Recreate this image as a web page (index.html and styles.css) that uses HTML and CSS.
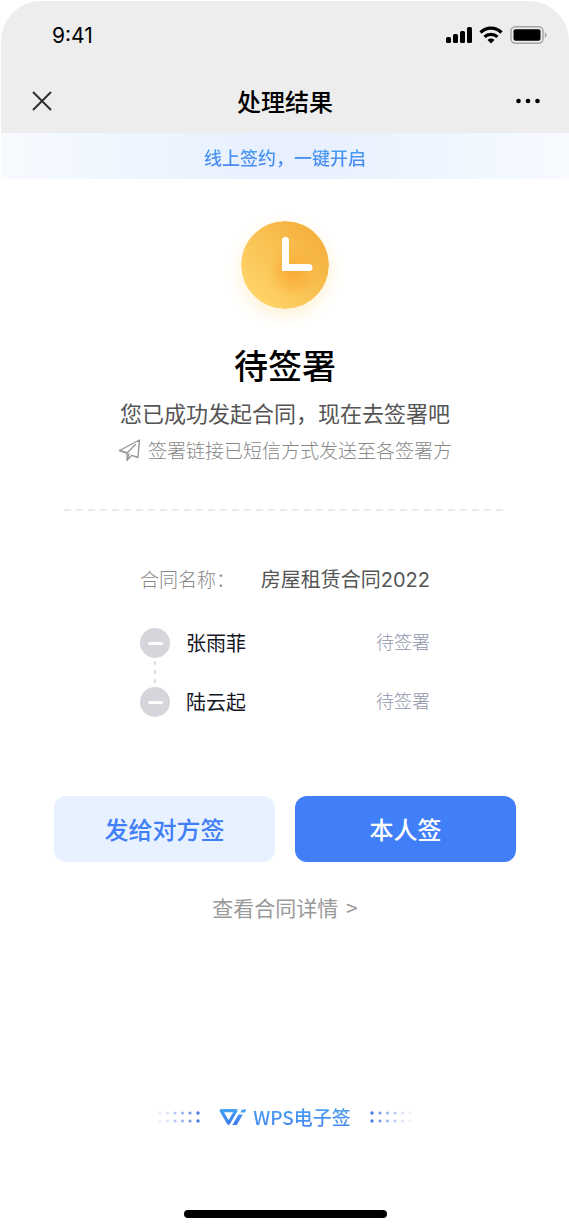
FILE: index.html
```html
<!DOCTYPE html>
<html lang="zh-CN">
<head>
<meta charset="utf-8">
<meta name="viewport" content="width=device-width, initial-scale=1">
<title>处理结果</title>
<link rel="stylesheet" href="styles.css">
</head>
<body>
<div class="screen">
  <header class="top">
    <div class="status-bar">
      <span class="time">9:41</span>
      <svg class="indicators" width="102" height="20" viewBox="0 0 102 20" aria-hidden="true">
        <rect x="1" y="12" width="5" height="6" rx="1.5"/>
        <rect x="8" y="9" width="5" height="9" rx="1.5"/>
        <rect x="15" y="6" width="5" height="12" rx="1.5"/>
        <rect x="22" y="2" width="5" height="16" rx="1.5"/>
        <g fill="none" stroke="#000" stroke-width="3.2">
          <path d="M35.5 7.5a15 15 0 0 1 21 0"/>
          <path d="M39.5 11.9a9.5 9.5 0 0 1 13 0"/>
        </g>
        <path d="M42.5 15a5.5 5.5 0 0 1 7 0L46 18.6z"/>
        <rect x="66" y="1.8" width="32" height="16.4" rx="4.5" fill="none" stroke="#a6a6a6" stroke-width="1.5"/>
        <rect x="68.5" y="4.2" width="27" height="11.6" rx="2"/>
        <path d="M99.8 7.2c2.4.8 2.4 4.8 0 5.6z" fill="#a6a6a6"/>
      </svg>
    </div>
    <nav class="nav">
      <button class="icon-button" type="button" aria-label="关闭">
        <svg width="20" height="20" viewBox="0 0 20 20"><path d="M1 1l18 18M19 1L1 19" fill="none" stroke="#2e2e2e" stroke-width="2"/></svg>
      </button>
      <h1 class="title">处理结果</h1>
      <button class="icon-button" type="button" aria-label="更多">
        <svg width="26" height="6" viewBox="0 0 26 6"><circle cx="3.5" cy="3" r="2.3"/><circle cx="13" cy="3" r="2.3"/><circle cx="22.5" cy="3" r="2.3"/></svg>
      </button>
    </nav>
  </header>
  <p class="banner"><span class="gradient-text">线上签约，一键开启</span></p>
  <main class="content">
    <section class="result">
      <svg class="clock" width="88" height="88" viewBox="0 0 88 88" aria-hidden="true">
        <defs>
          <linearGradient id="face" x1="0.1" y1="0.9" x2="0.85" y2="0.2"><stop offset="0" stop-color="#ffd66c"/><stop offset="1" stop-color="#f5b13f"/></linearGradient>
          <radialGradient id="shade"><stop offset="0" stop-color="#faa52c" stop-opacity=".8"/><stop offset="1" stop-color="#faa52c" stop-opacity="0"/></radialGradient>
        </defs>
        <circle cx="44" cy="44" r="44" fill="url(#face)"/>
        <circle cx="52" cy="51" r="25" fill="url(#shade)"/>
        <path d="M41 19.5a3.5 3.5 0 0 1 7 0V43h20a3.500 3.500 0 0 1 0 7H41z" fill="#fff"/>
      </svg>
      <h2 class="state">待签署</h2>
      <p class="message">您已成功发起合同，现在去签署吧</p>
      <p class="hint">
        <svg width="24" height="24" viewBox="0 0 24 24" fill="none" stroke="#999" stroke-width="1.4" stroke-linejoin="round" stroke-linecap="round" aria-hidden="true">
          <path d="M1.5 12.5L21.5 2l-1.600 17.500-6-2.200-4.700 4.700-.2-7z"/>
          <path d="M1.5 12.5L9 15l8.500-8.500M9.200 22l1.700-6"/>
        </svg>
        <span>签署链接已短信方式发送至各签署方</span>
      </p>
    </section>
    <svg class="divider" height="2" aria-hidden="true"><line x1="0" y1="1" x2="100%" y2="1" stroke="#e6e6e6" stroke-width="1.5" stroke-dasharray="7 5"/></svg>
    <section class="details" id="details">
      <dl class="contract"><dt>合同名称：</dt><dd>房屋租赁合同<span class="digits">2022</span></dd></dl>
      <ul class="signers">
        <li class="signer"><span class="mark"></span><span class="name">张雨菲</span><span class="pending">待签署</span></li>
        <li class="signer"><span class="mark"></span><span class="name">陆云起</span><span class="pending">待签署</span></li>
      </ul>
    </section>
    <div class="actions">
      <button class="button button-soft" type="button">发给对方签</button>
      <button class="button button-main" type="button">本人签</button>
    </div>
    <a class="more" href="#details">查看合同详情 <span class="arrow">&gt;</span></a>
  </main>
  <footer class="footer">
    <div class="brand">
      <svg class="dots" width="44" height="14" viewBox="0 0 44 14" aria-hidden="true"><g id="dots" fill="#4a7de0">
        <circle cx="3" cy="3" r="1.6" opacity=".12"/><circle cx="3" cy="11" r="1.6" opacity=".12"/>
        <circle cx="10.5" cy="3" r="1.6" opacity=".22"/><circle cx="10.5" cy="11" r="1.6" opacity=".22"/>
        <circle cx="18" cy="3" r="1.6" opacity=".4"/><circle cx="18" cy="11" r="1.6" opacity=".4"/>
        <circle cx="25.5" cy="3" r="1.6" opacity=".55"/><circle cx="25.5" cy="11" r="1.6" opacity=".55"/>
        <circle cx="33" cy="3" r="1.6" opacity=".75"/><circle cx="33" cy="11" r="1.6" opacity=".75"/>
        <circle cx="41" cy="3" r="1.7"/><circle cx="41" cy="11" r="1.7"/>
      </g></svg>
      <span class="brand-name">
        <svg width="28" height="18" viewBox="0 0 28 18" aria-hidden="true">
          <defs><linearGradient id="mark" gradientUnits="userSpaceOnUse" x1="0" y1="1" x2="0" y2="17"><stop offset="0" stop-color="#45a5f5"/><stop offset="1" stop-color="#3f77ee"/></linearGradient></defs>
          <path fill="none" stroke="url(#mark)" stroke-width="3.2" stroke-linejoin="round" d="M6 2.600h11L9.500 15.200 2.200 2.600H7"/>
          <path fill="url(#mark)" d="M19.5 6.5h4.300L17.800 17h-4.400zM23 1.500h4.400L25.800 4.600h-4.400z"/>
        </svg>
        <span class="gradient-text">WPS电子签</span>
      </span>
      <svg class="dots dots-right" width="44" height="14" viewBox="0 0 44 14" aria-hidden="true"><use href="#dots"/></svg>
    </div>
    <div class="home-indicator"></div>
  </footer>
</div>
</body>
</html>
```
FILE: styles.css
```css
* { box-sizing: border-box; }
body {
  margin: 0;
  background: #fff;
  color: #000;
  font-family: "Noto Sans CJK SC", sans-serif;
}
h1, h2, p, dl, dd, ul { margin: 0; padding: 0; }
button { border: 0; padding: 0; font-family: inherit; cursor: pointer; }
svg { display: block; flex: none; }
.screen {
  min-height: 100vh;
  padding: 1px 0 0 1px;
  display: flex;
  flex-direction: column;
}
.top { background: #ededed; border-radius: 40px 40px 0 0; }
.status-bar {
  height: 68px;
  padding: 0 22px 0 51px;
  display: flex;
  align-items: center;
  justify-content: space-between;
}
.time { font-family: Inter, sans-serif; font-size: 21px; }
.nav {
  height: 64px;
  padding: 0 27px;
  display: flex;
  align-items: center;
  justify-content: space-between;
}
.icon-button {
  width: 28px;
  height: 28px;
  display: grid;
  place-items: center;
  background: none;
}
.title { font-size: 24px; line-height: 36px; font-weight: 500; }
.banner {
  height: 46px;
  padding-top: 2px;
  display: grid;
  place-items: center;
  background: linear-gradient(90deg, #f7fbff, #e8f0ff 45%, #e8f0ff 55%, #f7fbff);
  font-size: 18px;
  line-height: 28px;
  font-weight: 500;
}
.gradient-text {
  background: linear-gradient(#4aa5f2, #4580f0);
  background-clip: text;
  -webkit-background-clip: text;
  color: transparent;
}
.content {
  padding: 42px 53px 0;
  display: flex;
  flex-direction: column;
  align-items: center;
}
.result { display: flex; flex-direction: column; align-items: center; }
.clock { border-radius: 50%; box-shadow: 0 6px 18px #fff0d2; }
.state { margin-top: 32px; font-size: 34px; line-height: 48px; font-weight: 500; }
.message { margin-top: 7px; font-size: 22px; line-height: 32px; color: #555; }
.hint {
  margin-top: 8px;
  display: flex;
  align-items: center;
  gap: 6px;
  font-size: 19px;
  line-height: 28px;
  color: #888;
  font-weight: 300;
}
.divider { width: calc(100% - 20px); margin-top: 45px; }
.details { width: 290px; margin-top: 53px; }
.contract { display: flex; justify-content: space-between; font-size: 20px; line-height: 30px; }
.contract dt { color: #888; font-size: 19px; font-weight: 300; }
.contract dd { color: #555; }
.digits { font-family: Inter, sans-serif; }
.signers { margin-top: 33px; display: grid; gap: 29px; list-style: none; }
.signer { position: relative; display: flex; align-items: center; height: 30px; }
.signer + .signer::before {
  content: "";
  position: absolute;
  left: 14px;
  bottom: 32px;
  width: 2px;
  height: 24px;
  background: repeating-linear-gradient(#dddee2 0 4px, transparent 4px 9px);
}
.mark {
  width: 30px;
  height: 30px;
  display: grid;
  place-items: center;
  border-radius: 50%;
  background: #d5d6db;
}
.mark::before { content: ""; width: 15px; height: 3px; border-radius: 2px; background: #fff; }
.name { margin-left: 16px; font-size: 20px; line-height: 30px; color: #15161f; }
.pending { margin-left: auto; padding-bottom: 4px; font-size: 18px; line-height: 26px; color: #8f96aa; font-weight: 300; }
.actions { width: 100%; margin-top: 79px; display: grid; grid-template-columns: 1fr 1fr; gap: 20px; }
.button { height: 66px; border-radius: 12px; font-size: 24px; line-height: 36px; font-weight: 500; }
.button-soft { background: #e8f1ff; color: #417ff9; }
.button-main { background: #417ff9; color: #fff; }
.more { margin-top: 29px; font-size: 21px; line-height: 32px; color: #999; text-decoration: none; }
.arrow { margin-left: 3px; }
.footer {
  margin-top: auto;
  padding-bottom: 13px;
  display: flex;
  flex-direction: column;
  align-items: center;
}
.brand { display: flex; align-items: center; gap: 18px; }
.brand-name { display: flex; align-items: center; gap: 6px; font-size: 19px; line-height: 30px; font-weight: 500; }
.dots-right { transform: scaleX(-1); }
.home-indicator { width: 203px; height: 8px; margin-top: 78px; border-radius: 4px; background: #000; }
```
